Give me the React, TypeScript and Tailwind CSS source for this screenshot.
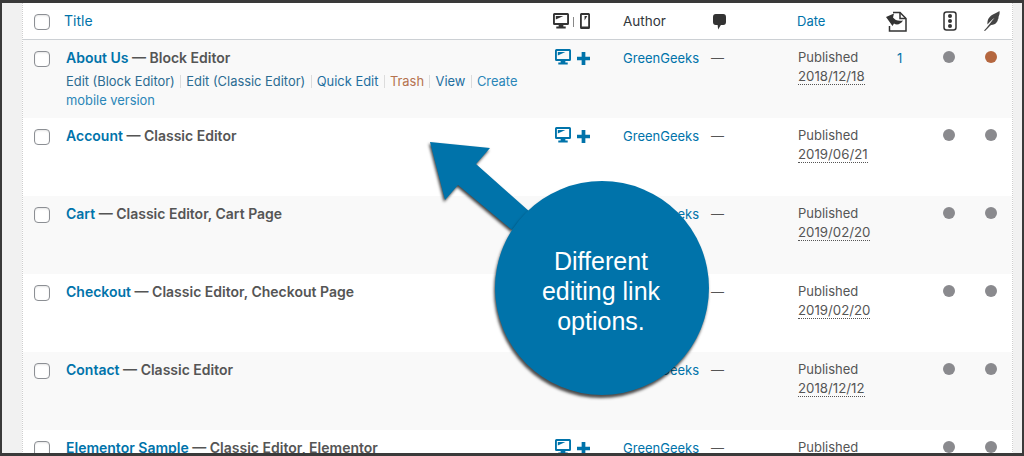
const LINK = "text-[#0073aa]";

function Desktop({ color }: { color: string }) {
  return (
    <svg width="16" height="16" viewBox="0 0 17 16" className="shrink-0" preserveAspectRatio="none">
      <path fill={color} fillRule="evenodd" d="M1.5 0h14A1.5 1.5 0 0 1 17 1.5v9a1.5 1.5 0 0 1-1.5 1.5H11v1.6h2.5V15.500h-10V13.600H6V12H1.500A1.500 1.500 0 0 1 0 10.500v-9A1.500 1.500 0 0 1 1.500 0ZM2 2v8h13V2Z" />
      <path fill={color} d="M3 3h8L3 6.500Z" />
    </svg>
  );
}

function Phone() {
  return (
    <svg width="10" height="16" viewBox="0 0 11 16" className="shrink-0" preserveAspectRatio="none">
      <path fill="#333" fillRule="evenodd" d="M1.500 0h8A1.500 1.500 0 0 1 11 1.500v13A1.500 1.500 0 0 1 9.500 16h-8A1.500 1.500 0 0 1 0 14.500v-13A1.500 1.500 0 0 1 1.500 0ZM2 2v11.500h7V2Z" />
      <path fill="#333" d="M5 3h3L5 7.500Z" />
    </svg>
  );
}

function Plus() {
  return (
    <svg width="13" height="13" viewBox="0 0 14 14" className="mt-[3px] shrink-0">
      <path fill="#0073aa" d="M5 0h4v5h5v4H9v5H5V9H0V5h5Z" />
    </svg>
  );
}

function Checkbox() {
  return <span className="block h-4 w-4 rounded-[4px] border border-[#8c8f94] bg-white shadow-[inset_0_1px_2px_rgba(0,0,0,0.1)]" />;
}

function Dot({ color = "#8a8a8e" }: { color?: string }) {
  return <span className="block h-3 w-3 rounded-full" style={{ backgroundColor: color }} />;
}

function Sep() {
  return <span className="mx-[5.25px] inline-block h-[13px] w-px translate-y-[2px] bg-[#dcdcdc]" />;
}

type RowData = {
  title: string;
  meta: string;
  date: string;
  bg: string;
  actions?: boolean;
  count?: string;
  hot?: boolean;
};

const rows: RowData[] = [
  { title: "About Us", meta: "Block Editor", date: "2018/12/18", bg: "bg-[#f9f9f9]", actions: true, count: "1", hot: true },
  { title: "Account", meta: "Classic Editor", date: "2019/06/21", bg: "bg-white" },
  { title: "Cart", meta: "Classic Editor, Cart Page", date: "2019/02/20", bg: "bg-[#f9f9f9]" },
  { title: "Checkout", meta: "Classic Editor, Checkout Page", date: "2019/02/20", bg: "bg-white" },
  { title: "Contact", meta: "Classic Editor", date: "2018/12/12", bg: "bg-[#f9f9f9]" },
  { title: "Elementor Sample", meta: "Classic Editor, Elementor", date: "", bg: "bg-white" },
];

function Row({ r }: { r: RowData }) {
  return (
    <div className={`flex h-[78px] shrink-0 ${r.bg}`}>
      <div className="w-[43px] shrink-0 pl-[11px] pt-[11px]">
        <Checkbox />
      </div>
      <div className="w-[489px] shrink-0 pt-[8px] pr-[30px]">
        <div className="h-5 text-[14px] leading-5 font-semibold text-[#555]">
          <span className={LINK}>{r.title}</span> — {r.meta}
        </div>
        {r.actions && (
          <div className="mt-[4px] text-[12.9px] leading-[19px] text-[#2a86b8]">
            <span className="text-[#2b6c92]">Edit (Block Editor)</span>
            <Sep />
            <span className="text-[#2b6c92]">Edit (Classic Editor)</span>
            <Sep />
            <span className="text-[#1f6f9f]">Quick Edit</span>
            <Sep />
            <span className="text-[#b5734f]">Trash</span>
            <Sep />
            <span className="text-[#1f6f9f]">View</span>
            <Sep />
            Create mobile version
          </div>
        )}
      </div>
      <div className="flex w-[68px] shrink-0 items-start gap-[6px] pt-[9px]">
        <Desktop color="#0073aa" />
        <Plus />
      </div>
      <div className={`w-[88px] shrink-0 pt-[8px] text-[13px] leading-5 ${LINK}`}>GreenGeeks</div>
      <div className="w-[87px] shrink-0 pt-[8px] text-[13px] leading-5 text-[#555]">—</div>
      <div className="w-[99px] shrink-0 pt-[7px] text-[13px] leading-5 text-[#555]">
        <div>Published</div>
        {r.date && <span className="block w-fit border-b border-dotted border-[#555] pt-px text-[13.25px] leading-[16px]">{r.date}</span>}
      </div>
      <div className={`w-[46px] shrink-0 pt-[8px] text-[13px] leading-5 ${LINK}`}>{r.count}</div>
      <div className="w-[42px] shrink-0 pt-[11px]">
        <Dot />
      </div>
      <div className="pt-[11px]">
        <Dot color={r.hot ? "#b5673f" : undefined} />
      </div>
    </div>
  );
}

function Header() {
  return (
    <div className="flex h-[37px] shrink-0 border-b border-[#ccd0d4] bg-white text-[14px] leading-5">
      <div className="w-[41px] shrink-0 pl-[11px] pt-[11px]">
        <Checkbox />
      </div>
      <div className={`w-[489px] shrink-0 pt-[8px] ${LINK}`}>Title</div>
      <div className="flex w-[70px] shrink-0 items-start pt-[10px]">
        <Desktop color="#333" />
        <span className="ml-[4px] mr-[6px] mt-[4px] h-[10px] w-px bg-[#888]" />
        <Phone />
      </div>
      <div className="w-[90px] shrink-0 pt-[8px] text-[13.5px] text-[#32373c]">Author</div>
      <div className="w-[84px] shrink-0 pt-[11px]">
        <svg width="13" height="16" viewBox="0 0 14 16" preserveAspectRatio="none">
          <path fill="#333" d="M3 0h8a3 3 0 0 1 3 3v5a3 3 0 0 1-3 3H8.500L5.500 15.500 5 11H3a3 3 0 0 1-3-3V3a3 3 0 0 1 3-3Z" />
        </svg>
      </div>
      <div className={`w-[89px] shrink-0 pt-[8px] text-[13px] ${LINK}`}>Date</div>
      <div className="w-[57px] shrink-0 pt-[8px]">
        <svg width="21" height="21" viewBox="0 0 21 21">
          <path fill="none" stroke="#333" strokeWidth="1.500" d="M7 1.500h7l6 6V20H3.500v-5" />
          <path fill="none" stroke="#333" strokeWidth="1.500" d="M14 1.500v6h6" />
          <path fill="#333" d="M0 6 8 2.500 7 6.500C9 9 12 10.500 17 9.500 15 13 11 14.500 8 12.500L6.500 15Z" />
        </svg>
      </div>
      <div className="w-[41px] shrink-0 pt-[8px]">
        <svg width="14" height="20" viewBox="0 0 14 20">
          <rect x="1" y="1" width="12" height="18" rx="2.500" fill="none" stroke="#333" strokeWidth="1.500" />
          <circle cx="7" cy="5" r="2" fill="#333" />
          <circle cx="7" cy="10" r="2" fill="#333" />
          <circle cx="7" cy="15" r="2" fill="#333" />
        </svg>
      </div>
      <div className="pt-[8px]">
        <svg width="16" height="20" viewBox="0 0 16 20">
          <path fill="#444" d="M15.500 0c.5 3-.5 4.500-1 6 .2 1-.2 2-.8 2.800.2 1-.5 2-1.200 2.700-.8 1.500-3 2.500-5.500 2.500C5 16 2.500 18.500 1 20l-1-.5C2.500 17 4 15 6 12.500 7.500 10.500 9 8.500 10.500 7 8 8.500 5.500 11 3.500 13.500 3 9 5 6 8 4c2.500-1.600 5.500-2.500 7.500-4Z" />
        </svg>
      </div>
    </div>
  );
}

export default function App() {
  return (
    <div className="relative h-[456px] w-[1024px] overflow-hidden border-x-2 border-y-[3px] border-x-[#3a3a3a] border-y-[#3a3a3a] bg-[#f1f1f1] font-['Inter','Liberation_Sans',sans-serif]">
      <div className="ml-[20px] mr-[9px] flex flex-col overflow-hidden border-x border-dotted border-[#cfcfcf] bg-white">
        <Header />
        {rows.map((r) => (
          <Row key={r.title} r={r} />
        ))}
      </div>

      {/* Callout: arrow and circle lying over the table */}
      <svg
        width="110"
        height="100"
        viewBox="0 0 110 100"
        className="absolute left-[423px] top-[135px] drop-shadow-[-1px_2px_1.5px_rgba(0,0,0,0.75)]"
      >
        <path fill="#0073aa" d="M5 4 65 10 51 26 105 74 87 92 33 47 20 62Z" />
      </svg>
      <div className="absolute left-[493px] top-[178px] flex h-[214px] w-[214px] flex-col items-center justify-center rounded-full bg-[#0073aa] pr-[2px] pt-[5px] text-center font-['Liberation_Sans',sans-serif] text-[25px] leading-[30px] text-white shadow-[-1px_3px_3px_rgba(0,0,0,0.7)]">
        <div>Different</div>
        <div>editing link</div>
        <div>options.</div>
      </div>
    </div>
  );
}
